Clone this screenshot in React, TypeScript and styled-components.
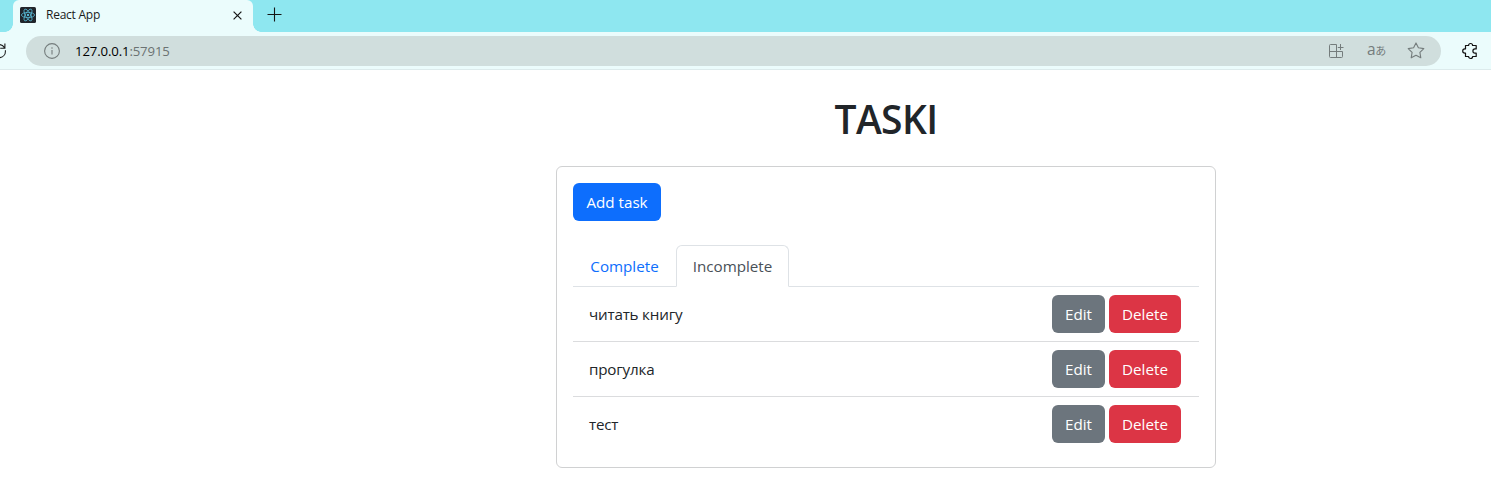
import React from 'react';
import styled, { createGlobalStyle, css } from 'styled-components';

const GlobalStyle = createGlobalStyle`
  *, *::before, *::after { box-sizing: border-box; }
  body {
    margin: 0;
    background: #fff;
    color: #212529;
    font-family: 'Open Sans', 'Noto Sans', sans-serif;
    font-size: 15.2px;
    line-height: 24px;
    overflow: hidden;
  }
  button { font: inherit; }
  svg { display: block; flex: none; }
`;

const Window = styled.div`
  width: 1491px;
  height: 487px;
  display: flex;
  flex-direction: column;
  overflow: hidden;
`;

const TabStrip = styled.div`
  height: 32px;
  display: flex;
  background: #8ee7f0;
  padding-left: 13px;
`;

const BrowserTab = styled.div`
  position: relative;
  width: 240px;
  height: 32px;
  display: flex;
  align-items: center;
  padding: 0 11px 2px 7px;
  background: #ebfcfc;
  border-radius: 6px 6px 0 0;

  &::before, &::after {
    content: '';
    position: absolute;
    bottom: 0;
    width: 8px;
    height: 8px;
  }
  &::before {
    left: -8px;
    background: radial-gradient(circle at 0 0, transparent 7.5px, #ebfcfc 8px);
  }
  &::after {
    right: -8px;
    background: radial-gradient(circle at 100% 0, transparent 7.5px, #ebfcfc 8px);
  }
`;

const BrowserTabTitle = styled.span`
  flex: 1;
  margin-left: 10px;
  font-size: 12px;
  letter-spacing: -0.25px;
  line-height: 16px;
  color: #1b1b1b;
`;

const NewTab = styled.div`
  padding: 7px 0 0 14px;
`;

const Toolbar = styled.div`
  height: 38px;
  flex: none;
  display: flex;
  align-items: center;
  background: #ebfcfc;
  border-bottom: 1px solid #dcebec;
`;

const ReloadSlot = styled.div`
  width: 26px;
  display: flex;
`;

const AddressBar = styled.div`
  width: 1415px;
  height: 30px;
  display: flex;
  align-items: center;
  border-radius: 15px;
  background: #d0dedd;
  padding: 0 16px 0 18px;
`;

const Url = styled.span`
  flex: 1;
  margin-left: 15px;
  font-size: 13.2px;
  letter-spacing: -0.14px;
  line-height: 18px;
  color: #000;
`;

const Port = styled.span`
  color: #6b7272;
`;

const AddressActions = styled.div`
  display: flex;
  align-items: center;
  color: #747c7c;
`;

const Translate = styled.span`
  width: 20px;
  margin: 0 20px 0 23px;
  font-size: 15.5px;
  letter-spacing: -0.5px;
  line-height: 16px;
  padding-bottom: 2px;
  white-space: nowrap;
`;

const Kana = styled.span`
  font-family: 'Noto Sans CJK JP', sans-serif;
  font-size: 11px;
`;

const ExtensionSlot = styled.div`
  margin-left: 21px;
`;

const Page = styled.main`
  width: 660px;
  margin-left: 556px;
  padding-top: 25px;
`;

const Title = styled.h1`
  margin: 0 0 23px;
  font-size: 39px;
  line-height: 48px;
  font-weight: 600;
  letter-spacing: -0.6px;
  text-align: center;
`;

const Card = styled.section`
  border: 1px solid #d0d1d2;
  border-radius: 6px;
  padding: 16px;
`;

type Tone = 'primary' | 'secondary' | 'danger';

const tones: Record<Tone, ReturnType<typeof css>> = {
  primary: css`width: 88px; background: #0d6efd;`,
  secondary: css`width: 53px; background: #6c757d;`,
  danger: css`width: 72px; background: #dc3545;`,
};

const Button = styled.button<{ $tone: Tone }>`
  display: block;
  height: 38px;
  padding: 0;
  border: 0;
  border-radius: 6px;
  color: #fff;
  line-height: 24px;
  white-space: nowrap;
  ${({ $tone }) => tones[$tone]}
`;

const Tabs = styled.nav`
  display: flex;
  margin-top: 24px;
  height: 42px;
  border-bottom: 1px solid #dee2e6;
`;

const TabLink = styled.a<{ $active?: boolean; $width: number }>`
  width: ${({ $width }) => $width}px;
  height: 42px;
  padding-top: 8px;
  border: 1px solid transparent;
  border-radius: 6px 6px 0 0;
  text-align: center;
  color: #0d6efd;
  ${({ $active }) =>
    $active &&
    css`
      color: #495057;
      background: #fff;
      border-color: #dee2e6 #dee2e6 #fff;
    `}
`;

const TaskRow = styled.li`
  display: flex;
  align-items: center;
  gap: 4px;
  padding: 8px 18px 8px 16px;
  border-bottom: 1px solid #dbdcde;
  &:last-child { border-bottom: 0; }
`;

const TaskList = styled.ul`
  margin: 0;
  padding: 0;
  list-style: none;
`;

const TaskName = styled.span`
  flex: 1;
  letter-spacing: -0.2px;
`;

const ReactLogo = () => (
  <svg width="16" height="16" viewBox="0 0 16 16" fill="none" stroke="#57b8d3" strokeWidth=".8">
    <rect width="16" height="16" rx="1.5" fill="#20252b" stroke="none" />
    <ellipse cx="8" cy="8" rx="6.6" ry="2.6" />
    <ellipse cx="8" cy="8" rx="6.6" ry="2.6" transform="rotate(60 8 8)" />
    <ellipse cx="8" cy="8" rx="6.6" ry="2.6" transform="rotate(120 8 8)" />
    <circle cx="8" cy="8" r="1.2" fill="#57b8d3" stroke="none" />
  </svg>
);

const CloseIcon = () => (
  <svg width="9" height="9" viewBox="0 0 9 9" stroke="#151515" strokeWidth="1.2">
    <path d="M.6 .6 8.4 8.4M8.4 .6 .6 8.4" />
  </svg>
);

const PlusIcon = () => (
  <svg width="15" height="15" viewBox="0 0 15 15" stroke="#151515" strokeWidth="1.1">
    <path d="M7.5 .5v14M.5 7.5h14" />
  </svg>
);

const ReloadIcon = () => (
  <svg width="7" height="16" viewBox="0 0 7 16" fill="none" stroke="#1a1a1a" strokeWidth="1.1">
    <path d="M0 1.6C1.7 1.8 3.3 2.8 4.5 4.6M4.9 .5v4.7H.2M5.4 7.2C5.7 11.3 3.3 14.2 0 14.6" />
  </svg>
);

const InfoIcon = () => (
  <svg width="16" height="16" viewBox="0 0 16 16" fill="none" stroke="#747c7c" strokeWidth="1.1">
    <circle cx="8" cy="8" r="7.4" />
    <path d="M8 7v4.6" />
    <circle cx="8" cy="4.9" r=".75" fill="#747c7c" stroke="none" />
  </svg>
);

const AppsIcon = () => (
  <svg width="16" height="16" viewBox="0 0 16 16" fill="none" stroke="currentColor" strokeWidth="1">
    <path d="M8.5 14.5v-13h-6a1 1 0 0 0-1 1v11a1 1 0 0 0 1 1h11a1 1 0 0 0 1-1V8.5h-13M12.5 1v6M9.8 4.5h5.7" />
  </svg>
);

const StarIcon = () => (
  <svg width="18" height="17" viewBox="0 0 18 17" fill="none" stroke="currentColor" strokeWidth="1.1" strokeLinejoin="round">
    <path d="M9 .9 11.4 5.8 16.8 6.6 12.9 10.4 13.8 15.8 9 13.2 4.2 15.8 5.1 10.4 1.2 6.6 6.6 5.8Z" />
  </svg>
);

const PuzzleIcon = () => (
  <svg width="16" height="18" viewBox="0 0 16 18" fill="none" stroke="#111" strokeWidth="1.2" strokeLinejoin="round">
    <path d="M3.5 3.5H6.6a2 2 0 0 1 4 0H14.2V6.9H13a2.1 2.1 0 0 0 0 4.2H14.2V14.5H10.6a2 2 0 0 1-4 0H3.5V11.1H2.8a2.1 2.1 0 0 1 0-4.2H3.5Z" />
  </svg>
);

const tasks = ['читать книгу', 'прогулка', 'тест'];

export default function App() {
  return (
    <Window>
      <GlobalStyle />
      <TabStrip>
        <BrowserTab>
          <ReactLogo />
          <BrowserTabTitle>React App</BrowserTabTitle>
          <CloseIcon />
        </BrowserTab>
        <NewTab>
          <PlusIcon />
        </NewTab>
      </TabStrip>
      <Toolbar>
        <ReloadSlot>
          <ReloadIcon />
        </ReloadSlot>
        <AddressBar>
          <InfoIcon />
          <Url>127.0.0.1<Port>:57915</Port></Url>
          <AddressActions>
            <AppsIcon />
            <Translate>a<Kana>あ</Kana></Translate>
            <StarIcon />
          </AddressActions>
        </AddressBar>
        <ExtensionSlot>
          <PuzzleIcon />
        </ExtensionSlot>
      </Toolbar>
      <Page>
        <Title>TASKI</Title>
        <Card>
          <Button $tone="primary">Add task</Button>
          <Tabs>
            <TabLink $width={103}>Complete</TabLink>
            <TabLink $width={113} $active>Incomplete</TabLink>
          </Tabs>
          <TaskList>
            {tasks.map((task) => (
              <TaskRow key={task}>
                <TaskName>{task}</TaskName>
                <Button $tone="secondary">Edit</Button>
                <Button $tone="danger">Delete</Button>
              </TaskRow>
            ))}
          </TaskList>
        </Card>
      </Page>
    </Window>
  );
}
